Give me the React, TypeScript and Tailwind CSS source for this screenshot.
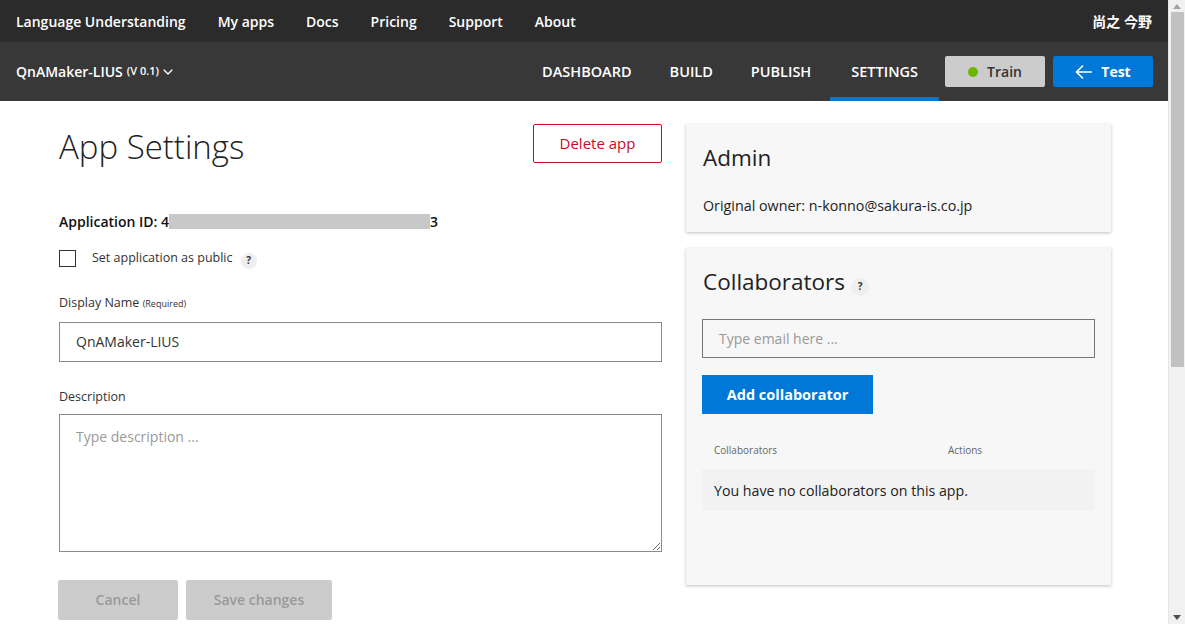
import { ChevronDown } from 'lucide-react'

const font = { fontFamily: '"Open Sans", "Noto Sans CJK JP", sans-serif' }

function Help({ small }: { small?: boolean }) {
  return (
    <span
      className={
        small
          ? 'inline-flex items-center justify-center w-[18px] h-[18px] rounded-full bg-[#efefef] text-[10px] font-bold text-[#333]'
          : 'inline-flex items-center justify-center w-[16px] h-[16px] rounded-full bg-[#efefef] text-[10px] font-bold text-[#333]'
      }
    >
      ?
    </span>
  )
}

function TopNav() {
  const links = ['My apps', 'Docs', 'Pricing', 'Support', 'About']
  return (
    <div className="h-[42px] shrink-0 bg-[#2b2b2b] flex items-center px-4 text-white text-[14px] font-semibold">
      <span>Language Understanding</span>
      <div className="flex gap-[32px] ml-[32px]">
        {links.map((l) => (
          <span key={l}>{l}</span>
        ))}
      </div>
      <span className="ml-auto">尚之 今野</span>
    </div>
  )
}

function AppBar() {
  const tabs = ['DASHBOARD', 'BUILD', 'PUBLISH', 'SETTINGS']
  return (
    <div className="h-[59px] shrink-0 bg-[#383838] flex items-stretch pl-4 pr-[15px] text-white">
      <div className="flex items-center text-[14px] font-semibold">
        QnAMaker-LIUS
        <span className="text-[11px] ml-1">(V 0.1)</span>
        <ChevronDown size={16} strokeWidth={2} className="ml-[1px]" />
      </div>
      <div className="ml-auto flex items-stretch">
        {tabs.map((t) => (
          <div
            key={t}
            className={
              t === 'SETTINGS'
                ? 'flex items-center px-[21px] text-[14.5px] font-semibold border-b-4 border-[#0078d7] pt-1'
                : 'flex items-center px-[19px] text-[14.5px] font-semibold border-b-4 border-transparent pt-1'
            }
          >
            {t}
          </div>
        ))}
      </div>
      <div className="flex items-center gap-2 ml-[6px]">
        <button className="w-[100px] h-[31px] rounded-[2px] bg-[#cccccc] flex items-center justify-center gap-[9px] text-[14px] text-[#333] font-semibold">
          <span className="w-[10px] h-[10px] rounded-full bg-[#6bb700]" />
          Train
        </button>
        <button className="w-[100px] h-[31px] rounded-[2px] bg-[#0078d7] flex items-center justify-center gap-[8px] text-[14px] text-white font-bold">
          <svg width="18" height="16" viewBox="0 0 18 16" fill="none" stroke="white" strokeWidth="1.6">
            <path d="M17 8H2M8 1.5L1.5 8L8 14.5" />
          </svg>
          Test
        </button>
      </div>
    </div>
  )
}

function LeftColumn() {
  return (
    <div className="w-[603px] flex flex-col">
      <div className="flex items-start justify-between">
        <h1 className="text-[33px] font-light text-[#222] leading-none mt-[6px]">App Settings</h1>
        <button className="w-[129px] h-[39px] border border-[#c50f1f] rounded-[2px] text-[#c50f1f] text-[15px] bg-white">
          Delete app
        </button>
      </div>

      <div className="mt-[48px] flex items-center text-[14px] font-semibold text-[#111]">
        Application ID: 4
        <span className="inline-block w-[261px] h-[15px] bg-[#c8c8c8]" />
        3
      </div>

      <div className="mt-[14px] flex items-center">
        <span className="w-[17px] h-[17px] border border-[#333] bg-white" />
        <span className="ml-[16px] text-[12.5px] text-[#333]">Set application as public</span>
        <span className="ml-[8px]">
          <Help />
        </span>
      </div>

      <div className="mt-[24px] text-[12.5px] text-[#333]">
        Display Name <span className="text-[9px]">(Required)</span>
      </div>
      <div className="mt-[9px] h-[40px] border border-[#8a8a8a] flex items-center px-4 text-[14px] text-[#333]">
        QnAMaker-LIUS
      </div>

      <div className="mt-[26px] text-[12.5px] text-[#333]">Description</div>
      <textarea
        className="mt-[7px] h-[138px] border border-[#8a8a8a] px-4 py-[11px] text-[14px] text-[#333] placeholder:text-[#999] outline-none resize-y"
        placeholder="Type description ..."
        style={font}
      />

      <div className="mt-[28px] flex gap-2 -ml-px">
        <button className="w-[120px] h-[40px] rounded-[2px] bg-[#cccccc] text-[#999] text-[14px] font-semibold">
          Cancel
        </button>
        <button className="w-[146px] h-[40px] rounded-[2px] bg-[#cccccc] text-[#999] text-[14px] font-semibold">
          Save changes
        </button>
      </div>
    </div>
  )
}

function RightColumn() {
  return (
    <div className="w-[425px] flex flex-col gap-4">
      <div className="bg-[#f7f7f7] shadow-[0_1px_3px_rgba(0,0,0,0.25)] px-[17px] pt-[20px] pb-[16px]">
        <div className="text-[22.5px] text-[#222] leading-[28px]">Admin</div>
        <div className="mt-[23px] text-[14.3px] text-[#222]">Original owner: n-konno@sakura-is.co.jp</div>
      </div>

      <div className="bg-[#f7f7f7] shadow-[0_1px_3px_rgba(0,0,0,0.25)] px-4 pt-[20px] h-[337px]">
        <div className="flex items-center gap-[6px] ml-px">
          <span className="text-[22.5px] text-[#222] leading-[28px]">Collaborators</span>
          <span className="mt-1">
            <Help small />
          </span>
        </div>
        <div className="mt-[23px] h-[39px] border border-[#777] bg-[#f7f7f7] flex items-center px-4 text-[14px] text-[#999]">
          Type email here ...
        </div>
        <button className="mt-[17px] w-[171px] h-[39px] bg-[#0078d7] text-white text-[14.5px] font-bold">
          Add collaborator
        </button>
        <div className="mt-[29px] flex text-[10px] text-[#666] px-3">
          <span className="w-[234px]">Collaborators</span>
          <span>Actions</span>
        </div>
        <div className="mt-[11px] h-[42px] bg-[#f2f2f2] flex items-center px-3 text-[14.2px] text-[#222]">
          You have no collaborators on this app.
        </div>
      </div>
    </div>
  )
}

function Scrollbar() {
  return (
    <div className="w-[17px] shrink-0 bg-[#f1f1f1] flex flex-col items-center border-l border-[#e6e6e6]">
      <div className="h-[12px] flex items-center justify-center">
        <svg width="8" height="5" viewBox="0 0 8 5">
          <path d="M0 5L4 0L8 5Z" fill="#a3a3a3" />
        </svg>
      </div>
      <div className="w-[13px] h-[355px] bg-[#c1c1c1]" />
      <div className="flex-1" />
      <div className="h-[14px] flex items-center justify-center">
        <svg width="8" height="5" viewBox="0 0 8 5">
          <path d="M0 0L4 5L8 0Z" fill="#505050" />
        </svg>
      </div>
    </div>
  )
}

export default function App() {
  return (
    <div className="h-screen w-full flex overflow-hidden bg-white" style={font}>
      <div className="flex-1 flex flex-col">
        <TopNav />
        <AppBar />
        <div className="flex shrink-0 gap-6 pl-[59px] pt-[23px]">
          <LeftColumn />
          <RightColumn />
        </div>
      </div>
      <Scrollbar />
    </div>
  )
}
